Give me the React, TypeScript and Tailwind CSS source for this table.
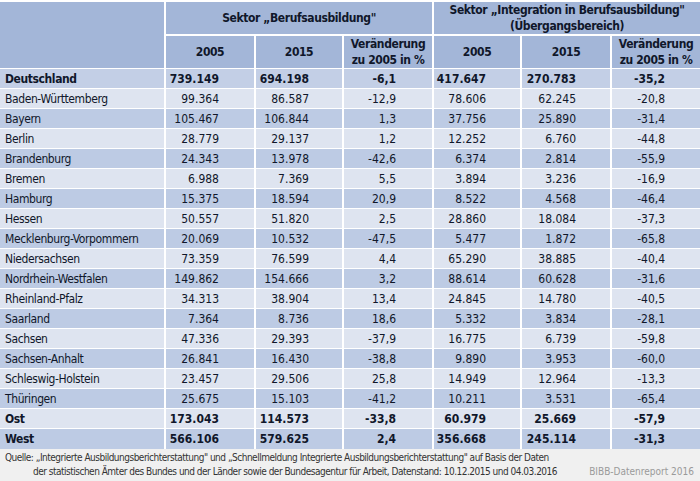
const ROWS: [string, string, string, string, string, string, string, boolean?][] = [
  ['Deutschland', '739.149', '694.198', '-6,1', '417.647', '270.783', '-35,2', true],
  ['Baden-Württemberg', '99.364', '86.587', '-12,9', '78.606', '62.245', '-20,8'],
  ['Bayern', '105.467', '106.844', '1,3', '37.756', '25.890', '-31,4'],
  ['Berlin', '28.779', '29.137', '1,2', '12.252', '6.760', '-44,8'],
  ['Brandenburg', '24.343', '13.978', '-42,6', '6.374', '2.814', '-55,9'],
  ['Bremen', '6.988', '7.369', '5,5', '3.894', '3.236', '-16,9'],
  ['Hamburg', '15.375', '18.594', '20,9', '8.522', '4.568', '-46,4'],
  ['Hessen', '50.557', '51.820', '2,5', '28.860', '18.084', '-37,3'],
  ['Mecklenburg-Vorpommern', '20.069', '10.532', '-47,5', '5.477', '1.872', '-65,8'],
  ['Niedersachsen', '73.359', '76.599', '4,4', '65.290', '38.885', '-40,4'],
  ['Nordrhein-Westfalen', '149.862', '154.666', '3,2', '88.614', '60.628', '-31,6'],
  ['Rheinland-Pfalz', '34.313', '38.904', '13,4', '24.845', '14.780', '-40,5'],
  ['Saarland', '7.364', '8.736', '18,6', '5.332', '3.834', '-28,1'],
  ['Sachsen', '47.336', '29.393', '-37,9', '16.775', '6.739', '-59,8'],
  ['Sachsen-Anhalt', '26.841', '16.430', '-38,8', '9.890', '3.953', '-60,0'],
  ['Schleswig-Holstein', '23.457', '29.506', '25,8', '14.949', '12.964', '-13,3'],
  ['Thüringen', '25.675', '15.103', '-41,2', '10.211', '3.531', '-65,4'],
  ['Ost', '173.043', '114.573', '-33,8', '60.979', '25.669', '-57,9', true],
  ['West', '566.106', '579.625', '2,4', '356.668', '245.114', '-31,3', true],
]

// Deutschland gets its own mid tone, the rest alternate light/dark
function rowBg(i: number): string {
  if (i === 0) return 'bg-[#c3cfe6]'
  return i % 2 === 1 ? 'bg-[#dee4f0]' : 'bg-[#bdcbe4]'
}

// DejaVu condensed face is the closest thing we have to the DIN-ish original
const FONT = "font-['DejaVu_Sans',sans-serif] font-stretch-condensed"

export default function App() {
  return (
    <div className={`w-[700px] h-[481px] bg-[#f0f0f0] text-[#10172a] ${FONT} overflow-hidden`}>
      <table className="w-[700px] table-fixed border-collapse text-[12px] leading-none">
        <colgroup>
          <col className="w-[165px]" />
          <col className="w-[90px]" />
          <col className="w-[88px]" />
          <col className="w-[90px]" />
          <col className="w-[88px]" />
          <col className="w-[90px]" />
          <col className="w-[89px]" />
        </colgroup>
        <thead className="bg-[#a3b6d8] font-bold tracking-[-0.4px]">
          <tr className="h-[34px]">
            <th rowSpan={2} className="border-r-2 border-t-2 border-white" />
            <th colSpan={3} className="border-r-2 border-t-2 border-b-2 border-white font-bold">
              Sektor „Berufsausbildung"
            </th>
            <th colSpan={3} className="border-t-2 border-b-2 border-white font-bold leading-[16px]">
              Sektor „Integration in Berufsausbildung"
              <br />
              (Übergangsbereich)
            </th>
          </tr>
          <tr className="h-[32px]">
            <th className="border-r-2 border-white">2005</th>
            <th className="border-r-2 border-white">2015</th>
            <th className="border-r-2 border-white leading-[16px]">Veränderung<br />zu 2005 in %</th>
            <th className="border-r-2 border-white">2005</th>
            <th className="border-r-2 border-white">2015</th>
            <th className="leading-[16px]">Veränderung<br />zu 2005 in %</th>
          </tr>
        </thead>
        <tbody>
          {ROWS.map(([name, a, b, c, d, e, f, bold], i) => (
            <tr key={name} className={`h-[20px] border-t border-white ${rowBg(i)} ${bold ? 'font-bold' : ''}`}>
              <td className="pl-[5px] border-r-2 border-white tracking-[-0.4px]">{name}</td>
              <td className="text-right pr-[35px] border-r-2 border-white">{a}</td>
              <td className="text-right pr-[33px] border-r-2 border-white">{b}</td>
              <td className="text-right pr-[36px] border-r-2 border-white">{c}</td>
              <td className="text-right pr-[34px] border-r-2 border-white">{d}</td>
              <td className="text-right pr-[34px] border-r-2 border-white">{e}</td>
              <td className="text-right pr-[35px]">{f}</td>
            </tr>
          ))}
        </tbody>
      </table>
      <div className="relative pl-[5px] pt-[2px] text-[10px] leading-[14px] text-[#333] tracking-[-0.5px]">
        <p className="whitespace-nowrap">Quelle: „Integrierte Ausbildungsberichterstattung" und „Schnellmeldung Integrierte Ausbildungsberichterstattung" auf Basis der Daten</p>
        <p className="pl-[28px] whitespace-nowrap">der statistischen Ämter des Bundes und der Länder sowie der Bundesagentur für Arbeit, Datenstand: 10.12.2015 und 04.03.2016</p>
        <span className="absolute right-[6px] bottom-0 text-[#9a9a9a] tracking-normal">BIBB-Datenreport 2016</span>
      </div>
    </div>
  )
}
